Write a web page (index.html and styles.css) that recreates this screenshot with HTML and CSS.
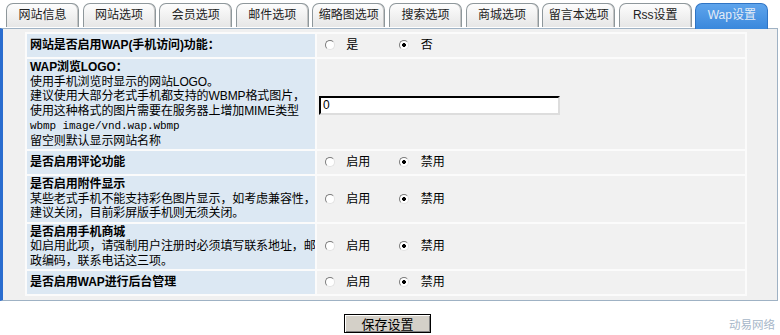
FILE: index.html
```html
<!DOCTYPE html>
<html lang="zh-CN">
<head>
  <meta charset="UTF-8" />
  <title>Wap设置</title>
  <link rel="stylesheet" href="styles.css">
</head>
<body>
  <div class="tabs">
    <span class="tab">网站信息</span>
    <span class="tab">网站选项</span>
    <span class="tab">会员选项</span>
    <span class="tab">邮件选项</span>
    <span class="tab">缩略图选项</span>
    <span class="tab">搜索选项</span>
    <span class="tab">商城选项</span>
    <span class="tab">留言本选项</span>
    <span class="tab">Rss设置</span>
    <span class="tab active">Wap设置</span>
  </div>

  <div class="panel">
    <table class="config">
      <tr>
        <td class="label"><b>网站是否启用WAP(手机访问)功能：</b></td>
        <td class="value">
          <label class="opt"><input type="radio" name="wap"> 是</label>
          <label class="opt"><input type="radio" name="wap" checked> 否</label>
        </td>
      </tr>
      <tr>
        <td class="label">
          <b>WAP浏览LOGO：</b><br>
          使用手机浏览时显示的网站LOGO。<br>
          建议使用大部分老式手机都支持的WBMP格式图片，<br>
          使用这种格式的图片需要在服务器上增加MIME类型<br>
          <span class="mono">wbmp image/vnd.wap.wbmp</span><br>
          留空则默认显示网站名称
        </td>
        <td class="value"><input type="text" class="text" value="0"></td>
      </tr>
      <tr>
        <td class="label"><b>是否启用评论功能</b></td>
        <td class="value">
          <label class="opt"><input type="radio" name="comment"> 启用</label>
          <label class="opt"><input type="radio" name="comment" checked> 禁用</label>
        </td>
      </tr>
      <tr>
        <td class="label">
          <b>是否启用附件显示</b><br>
          某些老式手机不能支持彩色图片显示，如考虑兼容性，<br>
          建议关闭，目前彩屏版手机则无须关闭。
        </td>
        <td class="value">
          <label class="opt"><input type="radio" name="attach"> 启用</label>
          <label class="opt"><input type="radio" name="attach" checked> 禁用</label>
        </td>
      </tr>
      <tr>
        <td class="label">
          <b>是否启用手机商城</b><br>
          如启用此项，请强制用户注册时必须填写联系地址，邮<br>
          政编码，联系电话这三项。
        </td>
        <td class="value">
          <label class="opt"><input type="radio" name="shop"> 启用</label>
          <label class="opt"><input type="radio" name="shop" checked> 禁用</label>
        </td>
      </tr>
      <tr>
        <td class="label"><b>是否启用WAP进行后台管理</b></td>
        <td class="value">
          <label class="opt"><input type="radio" name="admin"> 启用</label>
          <label class="opt"><input type="radio" name="admin" checked> 禁用</label>
        </td>
      </tr>
    </table>
  </div>

  <div class="footer">
    <button type="submit" class="save">保存设置</button>
    <span class="brand">动易网络</span>
  </div>
</body>
</html>
```

FILE: styles.css
```css
body {
  margin: 0;
  background: #fff;
  font-family: "Liberation Sans", "Noto Sans CJK SC", sans-serif;
  font-size: 12px;
  color: #000;
}
.tabs {
  display: flex;
  gap: 3.6px;
  padding: 3px 0 0 6px;
  height: 25px;
}
.tab {
  width: 73px;
  height: 24px;
  box-sizing: border-box;
  border: 1px solid #8e979b;
  border-bottom: none;
  border-radius: 7px 7px 0 0;
  background: linear-gradient(#fdfdfd, #e6e6e6);
  box-shadow: inset -1px 0 0 #c4c4c4;
  text-align: center;
  line-height: 23px;
  color: #222;
}
.tab.active {
  height: 26px;
  border-color: #2f74c4;
  background: linear-gradient(#5ea4ec, #3a88dc);
  box-shadow: none;
  color: #e4ecf6;
}
.panel {
  margin-right: 2px;
  border: 1px solid #9fb2c4;
  border-left: 3px solid #2a6dcf;
  background: #f0f0f0;
  padding: 3px 28px 4px 22px;
}
.config {
  width: 722px;
  border-spacing: 2px;
  background: #fbfbfb;
  table-layout: fixed;
}
.config td {
  height: 21px;
  padding: 1px 0;
  line-height: 14.5px;
  vertical-align: middle;
  white-space: nowrap;
  overflow: hidden;
}
.label {
  width: 285px;
  padding-left: 3px !important;
  background: #dce8f3;
  letter-spacing: -0.1px;
}
.value {
  background: #f1f1f1;
  padding-left: 2px !important;
}
.mono {
  font-family: "Liberation Mono", "DejaVu Sans Mono", monospace;
  font-size: 11px;
}
.opt {
  display: inline-block;
  width: 75px;
  margin-left: 6px;
  margin-right: -4px;
}
.opt + .opt {
  margin-left: 0;
}
.opt input {
  appearance: none;
  -webkit-appearance: none;
  width: 10px;
  height: 10px;
  margin: 0 8px 0 0;
  vertical-align: -1px;
  border: 1px solid;
  border-color: #7a7a7a #e2e2e2 #e2e2e2 #7a7a7a;
  border-radius: 50%;
  background: #fff;
}
.opt input:checked {
  background: radial-gradient(circle, #000 0 1.6px, #fff 2.2px);
}
.text {
  width: 241px;
  height: 19px;
  box-sizing: border-box;
  border: 2px inset #a0a0a0;
  border-color: #555 #ddd #ddd #555;
  padding: 0 2px;
  font-family: "Liberation Sans", sans-serif;
  font-size: 12px;
  background: #fff;
  margin-top: 2px;
}
.footer {
  display: grid;
  grid-template-columns: 1fr auto 1fr;
  align-items: center;
  margin-top: 13px;
  padding-right: 5px;
}
.save {
  grid-column: 2;
  width: 87px;
  height: 19px;
  padding: 0;
  border: 1px solid #000;
  box-shadow: inset 1px 1px 0 #fff, inset -1px -1px 0 #808080;
  background: #d4d0c8;
  font-family: "Noto Sans CJK SC", sans-serif;
  font-size: 13px;
  line-height: 17px;
  color: #000;
}
.brand {
  justify-self: end;
  color: #a6b6c8;
  font-size: 11.5px;
  line-height: 13px;
  margin-top: 4px;
}
```
